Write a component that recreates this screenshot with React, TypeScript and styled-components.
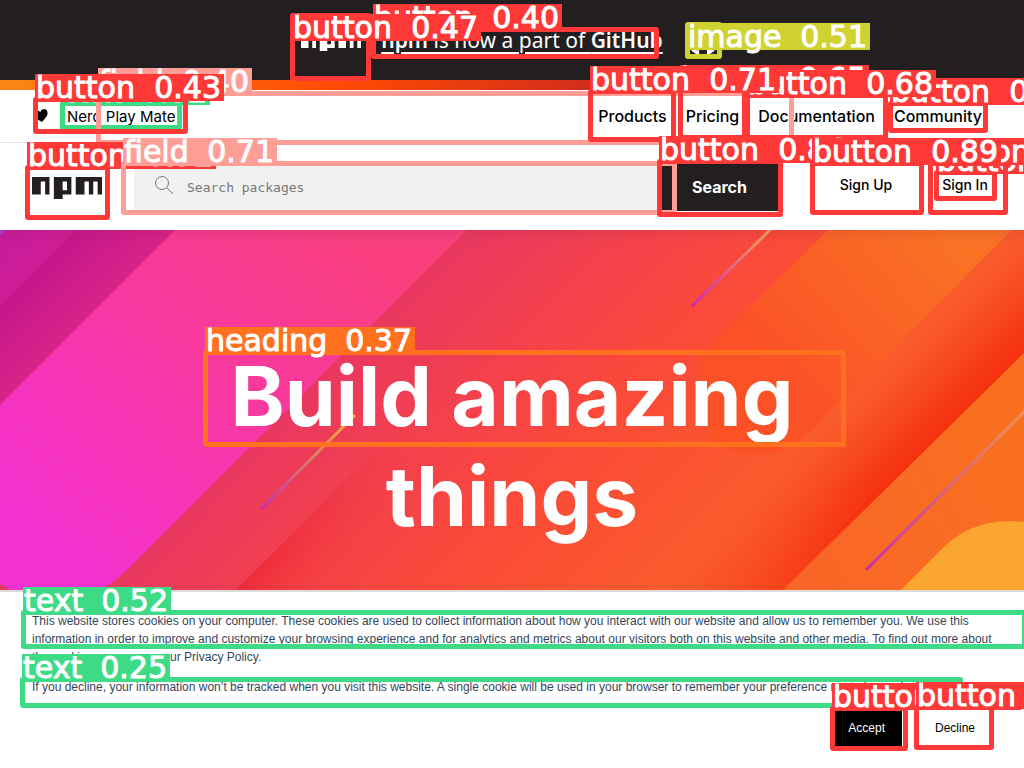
import React from "react";
import styled, { createGlobalStyle } from "styled-components";
import { FaGithub } from "react-icons/fa";

const GlobalStyle = createGlobalStyle`
  *, *::before, *::after { box-sizing: border-box; }
  body {
    margin: 0;
    background: #fff;
    color: #000;
    font-family: Inter, "Liberation Sans", sans-serif;
    font-size: 14px;
  }
`;

const Page = styled.div`
  position: relative;
  min-height: 100vh;
  display: flex;
  flex-direction: column;
`;

const Announcement = styled.div`
  height: 80px;
  padding-right: 4px;
  background: #231f20;
  color: #fff;
  display: flex;
  align-items: center;
  justify-content: center;
  gap: 20px;
`;

const AnnouncementLogo = styled.a`
  display: flex;
  padding-top: 4px;
  color: #fff;
`;

const AnnouncementLink = styled.a`
  color: #fff;
  font-family: "Noto Sans", sans-serif;
  font-size: 21px;
  line-height: 32px;
  text-underline-offset: 4px;
  white-space: nowrap;

  strong { font-weight: 600; }
`;

const GithubIcon = styled(FaGithub)`
  width: 32px;
  height: 32px;
  margin-left: 4px;
`;

const Rainbow = styled.div`
  height: 10px;
  background: linear-gradient(139deg, #fb8817, #ff4b01, #c12127, #e02aff);
`;

const TopNav = styled.nav`
  height: 53px;
  padding: 0 32px;
  border-bottom: 1px solid #e5e5e5;
  display: flex;
  align-items: center;
  justify-content: space-between;
`;

const Tagline = styled.div`
  display: flex;
  align-items: center;
  gap: 17px;
  font-size: 15px;
`;

const Heart = styled.svg`
  width: 18px;
  height: 18px;
  transform: rotate(-10deg);
`;

const NavList = styled.ul`
  display: flex;
  gap: 19px;
  margin: 0;
  padding: 0 10px;
  list-style: none;
`;

const NavLink = styled.a`
  color: #000;
  font-size: 16px;
  font-weight: 500;
  text-decoration: none;
`;

const Header = styled.header`
  display: flex;
  align-items: flex-start;
  padding: 20px 24px 19px 32px;
`;

const HomeLink = styled.a`
  display: flex;
  margin: 14px 32px 0 0;
  color: #231f20;
`;

const SearchForm = styled.form`
  flex: 1;
  min-width: 0;
  display: flex;
  height: 48px;
`;

const SearchField = styled.label`
  flex: 1;
  min-width: 0;
  display: flex;
  align-items: center;
  gap: 13px;
  padding-left: 20px;
  background: #f1f1f1;
`;

const SearchIcon = styled.svg`
  flex: none;
  width: 20px;
  height: 20px;
  margin-bottom: 4px;
`;

const SearchInput = styled.input`
  flex: 1;
  min-width: 0;
  border: 0;
  padding: 0;
  outline: 0;
  background: transparent;
  font-family: "DejaVu Sans Mono", monospace;
  font-size: 13px;

  &::placeholder { color: #777; opacity: 1; }
`;

const SearchButton = styled.button`
  width: 117px;
  border: 0;
  background: #231f20;
  color: #fff;
  font-family: inherit;
  font-size: 16px;
  font-weight: 700;
`;

const AccountLink = styled.a<{ $wide?: boolean }>`
  width: ${(p) => (p.$wide ? 112 : 70)}px;
  margin-left: ${(p) => (p.$wide ? 32 : 8)}px;
  line-height: 44px;
  text-align: center;
  color: #000;
  font-size: 14px;
  font-weight: 500;
  text-decoration: none;
`;

const Hero = styled.main`
  position: relative;
  min-height: 360px;
  padding: 117px 32px 43px;
  background: #fb4e35;
`;

const HeroArt = styled.svg`
  position: absolute;
  inset: 0;
  width: 100%;
  height: 100%;
`;

const HeroTitle = styled.h1`
  position: relative;
  max-width: 640px;
  margin: 0 auto;
  color: #fff;
  font-size: 82px;
  font-weight: 700;
  line-height: 100px;
  text-align: center;
`;

const CookieBanner = styled.section`
  position: relative;
  flex: 1;
  padding: 20px 32px;
  background: #fff;
  border-top: 2px solid #dcdcdc;
  color: #33475b;
  font-family: "Liberation Sans", sans-serif;
  font-size: 12px;
  line-height: 18px;
`;

const CookieText = styled.p`
  margin: 0 -4px 12px 0;
`;

const CookieActions = styled.div`
  display: flex;
  justify-content: flex-end;
  gap: 16px;
  margin-top: 13px;
`;

const CookieButton = styled.button<{ $primary?: boolean }>`
  height: 38px;
  padding: 0 16px;
  border: 1px solid ${(p) => (p.$primary ? "#000" : "#fff")};
  background: ${(p) => (p.$primary ? "#000" : "#fff")};
  color: ${(p) => (p.$primary ? "#fff" : "#000")};
  font-family: inherit;
  font-size: 12px;
`;

type Kind = "button" | "field" | "text" | "heading" | "image";

const kinds: Record<Kind, { color: string; width: number }> = {
  button: { color: "#ff3838", width: 189 },
  field: { color: "#ff9d97", width: 154 },
  text: { color: "#3ddb86", width: 148 },
  heading: { color: "#ff701f", width: 210 },
  image: { color: "#cfd231", width: 183 },
};

interface Detection {
  kind: Kind;
  score: string;
  x: number;
  y: number;
  w: number;
  h: number;
  inside?: boolean;
}

const detections: Detection[] = [
  { kind: "text", score: "0.25", x: 20, y: 677, w: 943, h: 31 },
  { kind: "text", score: "0.32", x: 60, y: 101, w: 122, h: 29 },
  { kind: "heading", score: "0.37", x: 203, y: 350, w: 643, h: 97 },
  { kind: "field", score: "0.40", x: 96, y: 91, w: 698, h: 54 },
  { kind: "button", score: "0.40", x: 371, y: 27, w: 288, h: 32 },
  { kind: "button", score: "0.43", x: 33, y: 97, w: 155, h: 37 },
  { kind: "button", score: "0.47", x: 290, y: 13, w: 81, h: 68, inside: true },
  { kind: "image", score: "0.51", x: 685, y: 22, w: 37, h: 37, inside: true },
  { kind: "text", score: "0.52", x: 21, y: 610, w: 1006, h: 39 },
  { kind: "button", score: "0.53", x: 934, y: 170, w: 63, h: 31 },
  { kind: "button", score: "0.62", x: 888, y: 101, w: 100, h: 32 },
  { kind: "button", score: "0.65", x: 678, y: 88, w: 69, h: 52 },
  { kind: "button", score: "0.68", x: 745, y: 93, w: 143, h: 47 },
  { kind: "button", score: "0.72", x: 25, y: 165, w: 85, h: 55 },
  { kind: "field", score: "0.71", x: 121, y: 161, w: 556, h: 54 },
  { kind: "button", score: "0.71", x: 588, y: 89, w: 88, h: 53 },
  { kind: "button", score: "0.84", x: 657, y: 159, w: 126, h: 58 },
  { kind: "button", score: "0.86", x: 928, y: 161, w: 80, h: 54 },
  { kind: "button", score: "0.86", x: 830, y: 706, w: 78, h: 45 },
  { kind: "button", score: "0.88", x: 914, y: 705, w: 80, h: 45 },
  { kind: "button", score: "0.89", x: 810, y: 161, w: 114, h: 54 },
];

const DetectionLayer = styled.div`
  position: absolute;
  inset: 0;
  overflow: hidden;
  pointer-events: none;
`;

const DetectionBox = styled.div<{ $d: Detection }>`
  position: absolute;
  left: ${(p) => p.$d.x}px;
  top: ${(p) => p.$d.y}px;
  width: ${(p) => p.$d.w}px;
  height: ${(p) => p.$d.h}px;
  border: 5px solid ${(p) => kinds[p.$d.kind].color};
  border-radius: 3px;
`;

const DetectionLabel = styled.div<{ $d: Detection }>`
  position: absolute;
  left: -3px;
  top: ${(p) => (p.$d.inside ? -4 : -28)}px;
  width: ${(p) => kinds[p.$d.kind].width}px;
  height: 27px;
  display: flex;
  justify-content: space-between;
  padding: 0 3px 0 1px;
  background: ${(p) => kinds[p.$d.kind].color};
  color: #fff;
  font-family: "DejaVu Sans", sans-serif;
  font-size: 30px;
  line-height: 28px;
  -webkit-text-stroke: 1px #fff;
`;

function Wordmark({ width }: { width: number }) {
  return (
    <svg width={width} viewBox="0 0 16 5" fill="currentColor" fillRule="evenodd" role="img" aria-label="npm">
      <path d="M0 0h4v4H3V1H2v3H0zM5 0h4v4H7v1H5zM7 1v2h1V1zM10 0h6v4h-1V1h-1v3h-1V1h-1v3h-2z" />
    </svg>
  );
}

function HeroArtwork() {
  const g = { gradientUnits: "userSpaceOnUse" as const };
  return (
    <HeroArt viewBox="0 0 1024 360" preserveAspectRatio="xMidYMid slice" aria-hidden="true">
      <defs>
        <linearGradient id="base" {...g} x1="233" y1="233" x2="506" y2="506">
          <stop offset="0" stopColor="#e93860" />
          <stop offset="0.35" stopColor="#f5424a" />
          <stop offset="0.6" stopColor="#fb4a38" />
          <stop offset="1" stopColor="#fa5a2d" />
        </linearGradient>
        <linearGradient id="violet" {...g} x1="0" y1="0" x2="37" y2="37">
          <stop offset="0" stopColor="#c51a9f" />
          <stop offset="1" stopColor="#cf1d96" />
        </linearGradient>
        <linearGradient id="plum" {...g} x1="37" y1="37" x2="88" y2="88">
          <stop offset="0" stopColor="#c4158b" />
          <stop offset="1" stopColor="#d82388" />
        </linearGradient>
        <linearGradient id="pink" {...g} x1="360" y1="0" x2="60" y2="330">
          <stop offset="0" stopColor="#f93f7c" />
          <stop offset="0.45" stopColor="#f739a0" />
          <stop offset="1" stopColor="#f430d0" />
        </linearGradient>
        <linearGradient id="crimson" {...g} x1="298" y1="298" x2="355" y2="355">
          <stop offset="0" stopColor="#ee2b3a" />
          <stop offset="1" stopColor="#f94a38" stopOpacity="0" />
        </linearGradient>
        <linearGradient id="crimsonFade" {...g} x1="350" y1="190" x2="250" y2="340">
          <stop offset="0" stopColor="#000" />
          <stop offset="1" stopColor="#fff" />
        </linearGradient>
        <mask id="crimsonMask">
          <rect width="1024" height="360" fill="url(#crimsonFade)" />
        </mask>
        <linearGradient id="orange" {...g} x1="950" y1="10" x2="790" y2="160">
          <stop offset="0" stopColor="#f97224" />
          <stop offset="1" stopColor="#fb5127" />
        </linearGradient>
        <linearGradient id="scarlet" {...g} x1="506" y1="506" x2="573" y2="573">
          <stop offset="0" stopColor="#f95b2c" />
          <stop offset="0.2" stopColor="#f9582a" />
          <stop offset="1" stopColor="#f5300c" />
        </linearGradient>
        <linearGradient id="scarletFade" {...g} x1="960" y1="140" x2="760" y2="370">
          <stop offset="0" stopColor="#fff" />
          <stop offset="0.5" stopColor="#fff" />
          <stop offset="1" stopColor="#888" />
        </linearGradient>
        <mask id="scarletMask">
          <rect width="1024" height="360" fill="url(#scarletFade)" />
        </mask>
        <linearGradient id="amber" {...g} x1="820" y1="360" x2="1024" y2="250">
          <stop offset="0" stopColor="#f96627" />
          <stop offset="1" stopColor="#f87020" />
        </linearGradient>
        <linearGradient id="shade" x1="0" y1="0" x2="0" y2="1">
          <stop offset="0" stopColor="#802040" stopOpacity="0.12" />
          <stop offset="1" stopColor="#802040" stopOpacity="0" />
        </linearGradient>
        <linearGradient id="ray1" {...g} x1="692" y1="75" x2="770" y2="0">
          <stop offset="0" stopColor="#c92cb0" />
          <stop offset="1" stopColor="#f3a257" />
        </linearGradient>
        <linearGradient id="ray2" {...g} x1="261" y1="279" x2="355" y2="185">
          <stop offset="0" stopColor="#c92cb0" />
          <stop offset="0.5" stopColor="#d77a6c" />
          <stop offset="1" stopColor="#fdb52d" />
        </linearGradient>
        <linearGradient id="ray3" {...g} x1="866" y1="340" x2="1024" y2="182">
          <stop offset="0" stopColor="#c92cb0" />
          <stop offset="1" stopColor="#ee9258" />
        </linearGradient>
      </defs>
      <rect width="1024" height="360" fill="url(#base)" />
      <path d="M596 0H740L380 360H236z" fill="url(#crimson)" mask="url(#crimsonMask)" />
      <path d="M0 0H75L0 75z" fill="url(#violet)" />
      <path d="M75 0H175L0 175V75z" fill="url(#plum)" />
      <path d="M0 0H6L0 6z" fill="#a43fd6" />
      <path d="M175 0H467L131 336Q110 357 96 360H12Q5 358 0 353V175z" fill="url(#pink)" />
      <path d="M1012 0H1024V123L786 360H652z" fill="url(#scarlet)" mask="url(#scarletMask)" />
      <path d="M828 0H1012L822 190Q788 228 750 224Q722 221 706 205L700 128z" fill="url(#orange)" />
      <path d="M1024 123V360H783z" fill="url(#amber)" />
      <path d="M901 360L940 321Q968 291 1010 291L1024 292V360z" fill="#f9a530" />
      <g fill="none" strokeWidth="3">
        <path d="M692 76L771 -1" stroke="url(#ray1)" />
        <path d="M261 279L355 185" stroke="url(#ray2)" />
        <path d="M866 340L1025 181" stroke="url(#ray3)" />
      </g>
      <rect width="1024" height="14" fill="url(#shade)" />
    </HeroArt>
  );
}

const navItems = ["Products", "Pricing", "Documentation", "Community"];

export default function App() {
  return (
    <Page>
      <GlobalStyle />
      <Announcement>
        <AnnouncementLogo href="#">
          <Wordmark width={60} />
        </AnnouncementLogo>
        <AnnouncementLink href="#">
          <strong>npm</strong> is now a part of <strong>GitHub</strong>
        </AnnouncementLink>
        <GithubIcon />
      </Announcement>
      <Rainbow />
      <TopNav>
        <Tagline>
          <Heart viewBox="0 0 18 18" aria-hidden="true">
            <path d="M9 15C5 12 2 10 2 6.500C2 2 7 1.500 9 5C11 1.500 16 2 16 6.500C16 10 13 12 9 15z" />
          </Heart>
          <span>Nerd Play Mate</span>
        </Tagline>
        <NavList>
          {navItems.map((item) => (
            <li key={item}>
              <NavLink href="#">{item}</NavLink>
            </li>
          ))}
        </NavList>
      </TopNav>
      <Header>
        <HomeLink href="#">
          <Wordmark width={70} />
        </HomeLink>
        <SearchForm onSubmit={(e) => e.preventDefault()}>
          <SearchField>
            <SearchIcon viewBox="0 0 20 20" fill="none" stroke="#777" aria-hidden="true">
              <circle cx="8" cy="8" r="6.500" />
              <path d="M12.700 12.700L19 19" />
            </SearchIcon>
            <SearchInput type="search" placeholder="Search packages" aria-label="Search packages" />
          </SearchField>
          <SearchButton type="submit">Search</SearchButton>
        </SearchForm>
        <AccountLink href="#" $wide>
          Sign Up
        </AccountLink>
        <AccountLink href="#">Sign In</AccountLink>
      </Header>
      <Hero>
        <HeroArtwork />
        <HeroTitle>Build amazing things</HeroTitle>
      </Hero>
      <CookieBanner>
        <CookieText>
          This website stores cookies on your computer. These cookies are used to collect information about how you
          interact with our website and allow us to remember you. We use this information in order to improve and
          customize your browsing experience and for analytics and metrics about our visitors both on this website and
          other media. To find out more about the cookies we use, see our Privacy Policy.
        </CookieText>
        <CookieText>
          If you decline, your information won’t be tracked when you visit this website. A single cookie will be used in
          your browser to remember your preference not to be tracked.
        </CookieText>
        <CookieActions>
          <CookieButton type="button" $primary>
            Accept
          </CookieButton>
          <CookieButton type="button">Decline</CookieButton>
        </CookieActions>
      </CookieBanner>
      <DetectionLayer>
        {detections.map((d) => (
          <DetectionBox key={`${d.x}-${d.y}`} $d={d}>
            <DetectionLabel $d={d}>
              <span>{d.kind}</span>
              <span>{d.score}</span>
            </DetectionLabel>
          </DetectionBox>
        ))}
      </DetectionLayer>
    </Page>
  );
}
